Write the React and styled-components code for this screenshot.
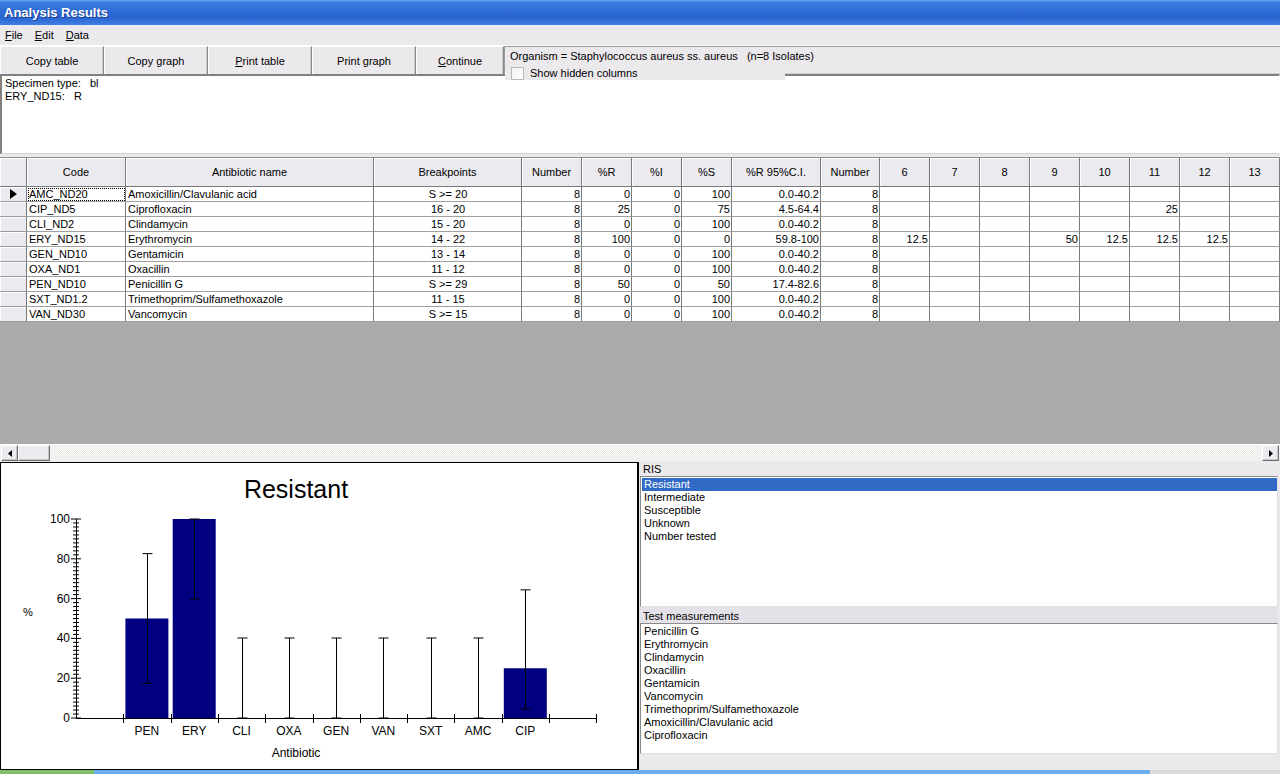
import React from "react"
import styled, { createGlobalStyle } from "styled-components"

const GlobalStyle = createGlobalStyle`
  html, body {
    margin: 0;
    padding: 0;
  }
  body {
    font-family: "Liberation Sans", Arial, sans-serif;
    font-size: 11px;
    color: #000;
    background: #ece9ed;
    overflow: hidden;
  }
`

const COLS =
  "27px 99px 248px 148px 60px 50px 50px 50px 89px 59px 50px 50px 50px 50px 50px 50px 50px 50px"

const HEADERS = [
  "",
  "Code",
  "Antibiotic name",
  "Breakpoints",
  "Number",
  "%R",
  "%I",
  "%S",
  "%R 95%C.I.",
  "Number",
  "6",
  "7",
  "8",
  "9",
  "10",
  "11",
  "12",
  "13",
]

const ROWS = [
  ["AMC_ND20", "Amoxicillin/Clavulanic acid", "S >= 20", "8", "0", "0", "100", "0.0-40.2", "8", {}],
  ["CIP_ND5", "Ciprofloxacin", "16 - 20", "8", "25", "0", "75", "4.5-64.4", "8", { 11: "25" }],
  ["CLI_ND2", "Clindamycin", "15 - 20", "8", "0", "0", "100", "0.0-40.2", "8", {}],
  [
    "ERY_ND15",
    "Erythromycin",
    "14 - 22",
    "8",
    "100",
    "0",
    "0",
    "59.8-100",
    "8",
    { 6: "12.5", 9: "50", 10: "12.5", 11: "12.5", 12: "12.5" },
  ],
  ["GEN_ND10", "Gentamicin", "13 - 14", "8", "0", "0", "100", "0.0-40.2", "8", {}],
  ["OXA_ND1", "Oxacillin", "11 - 12", "8", "0", "0", "100", "0.0-40.2", "8", {}],
  ["PEN_ND10", "Penicillin G", "S >= 29", "8", "50", "0", "50", "17.4-82.6", "8", {}],
  ["SXT_ND1.2", "Trimethoprim/Sulfamethoxazole", "11 - 15", "8", "0", "0", "100", "0.0-40.2", "8", {}],
  ["VAN_ND30", "Vancomycin", "S >= 15", "8", "0", "0", "100", "0.0-40.2", "8", {}],
]

// chart data, in the order the graph shows them
const BARS = [
  { code: "PEN", r: 50, lo: 17.4, hi: 82.6 },
  { code: "ERY", r: 100, lo: 59.8, hi: 100 },
  { code: "CLI", r: 0, lo: 0, hi: 40.2 },
  { code: "OXA", r: 0, lo: 0, hi: 40.2 },
  { code: "GEN", r: 0, lo: 0, hi: 40.2 },
  { code: "VAN", r: 0, lo: 0, hi: 40.2 },
  { code: "SXT", r: 0, lo: 0, hi: 40.2 },
  { code: "AMC", r: 0, lo: 0, hi: 40.2 },
  { code: "CIP", r: 25, lo: 4.5, hi: 64.4 },
]

const RIS = ["Resistant", "Intermediate", "Susceptible", "Unknown", "Number tested"]

const TESTS = [
  "Penicillin G",
  "Erythromycin",
  "Clindamycin",
  "Oxacillin",
  "Gentamicin",
  "Vancomycin",
  "Trimethoprim/Sulfamethoxazole",
  "Amoxicillin/Clavulanic acid",
  "Ciprofloxacin",
]

const Window = styled.div`
  width: 1280px;
  height: 774px;
  display: flex;
  flex-direction: column;
  background: #ece9ed;
  overflow: hidden;
`

const TitleBar = styled.div`
  height: 25px;
  flex: none;
  display: flex;
  align-items: center;
  padding-left: 4px;
  color: #fff;
  font-weight: bold;
  font-size: 13px;
  text-shadow: 1px 1px 0 #1c3f94;
  background: linear-gradient(
    to bottom,
    #6aa2f0 0%,
    #3a7ee2 10%,
    #2d6ad6 45%,
    #2a64d0 70%,
    #3f80e4 100%
  );
`

const MenuBar = styled.div`
  height: 20px;
  flex: none;
  display: flex;
  align-items: center;
`

const MenuItem = styled.span`
  padding: 0 6px 0 5px;
  margin-right: 1px;
`

const ToolRow = styled.div`
  height: 29px;
  flex: none;
  display: flex;
  border-top: 1px solid #fff;
  box-sizing: border-box;
  position: relative;
  z-index: 2;
`

const ToolButton = styled.div`
  width: ${(p) => p.$w}px;
  flex: none;
  display: flex;
  align-items: center;
  justify-content: center;
  box-sizing: border-box;
  border-left: 1px solid #fff;
  border-top: 1px solid #fff;
  border-right: 1px solid #8a8a8a;
  box-shadow: inset -1px 0 0 #c9c7cc;
  padding-top: 1px;
`

const OrganismPanel = styled.div`
  flex: 1;
  position: relative;
  box-sizing: border-box;
  border-left: 1px solid #9a9a9a;
  border-top: 1px solid #9a9a9a;
  border-bottom: 1px solid #d0d0d0;
  padding: 3px 0 0 5px;
  line-height: 13px;
`

const HiddenColumns = styled.label`
  position: absolute;
  left: 0;
  top: 17px;
  width: 280px;
  height: 16px;
  display: flex;
  align-items: center;
  gap: 6px;
  padding: 2px 0 0 6px;
  box-sizing: border-box;
  background: #ece9ed;
`

const CheckBox = styled.span`
  width: 11px;
  height: 11px;
  flex: none;
  border: 1px solid #b8b8b8;
  background: linear-gradient(135deg, #f2f2f2, #fff);
`

const Notes = styled.div`
  height: 80px;
  flex: none;
  box-sizing: border-box;
  background: #fff;
  border-top: 2px solid #808080;
  border-left: 2px solid #808080;
  border-right: 1px solid #fff;
  border-bottom: 1px solid #d4d0c8;
  padding: 1px 3px;
  line-height: 13px;
  white-space: pre;
  margin-bottom: 3px;
`

const GridArea = styled.div`
  height: 287px;
  flex: none;
  background: #ababab;
  border-top: 1px solid #8e8e8e;
  box-sizing: border-box;
  overflow: hidden;
`

const GridRow = styled.div`
  display: grid;
  grid-template-columns: ${COLS};
  height: ${(p) => p.$h}px;
  background: #fff;
`

const HeadCell = styled.div`
  display: flex;
  align-items: center;
  justify-content: center;
  box-sizing: border-box;
  background: #ebeaef;
  border-right: 1px solid #7a7a7a;
  border-bottom: 1px solid #7a7a7a;
  box-shadow: inset 1px 1px 0 #fff;
  white-space: nowrap;
  overflow: hidden;
`

const RowHead = styled.div`
  display: flex;
  align-items: center;
  box-sizing: border-box;
  padding-left: 10px;
  background: #ebeaef;
  border-right: 1px solid #7a7a7a;
  border-bottom: 1px solid #9a9a9a;
  box-shadow: inset 1px 1px 0 #fff;
`

const Cell = styled.div`
  display: flex;
  align-items: center;
  justify-content: ${(p) =>
    p.$align === "right" ? "flex-end" : p.$align === "center" ? "center" : "flex-start"};
  box-sizing: border-box;
  padding: 0 1px 0 2px;
  border-right: 1px solid #7a7a7a;
  border-bottom: 1px solid #a0a0a0;
  white-space: nowrap;
  overflow: hidden;
  outline: ${(p) => (p.$focus ? "1px dotted #000" : "none")};
  outline-offset: -2px;
`

const ScrollBar = styled.div`
  height: 17px;
  flex: none;
  display: flex;
  align-items: stretch;
  background: repeating-conic-gradient(#fbfbf9 0 25%, #e9e8e4 0 50%) 0 0 / 2px 2px;
  border-top: 1px solid #fff;
  box-sizing: border-box;
`

const ScrollButton = styled.div`
  width: ${(p) => p.$w}px;
  flex: none;
  margin-left: ${(p) => p.$ml || 0}px;
  display: flex;
  align-items: center;
  justify-content: center;
  box-sizing: border-box;
  background: #ebeaef;
  border-top: 1px solid #fff;
  border-left: 1px solid #fff;
  border-right: 1px solid #707070;
  border-bottom: 1px solid #707070;
  box-shadow: inset -1px -1px 0 #c6c4c8;
`

const Bottom = styled.div`
  height: 309px;
  flex: none;
  display: flex;
  padding-top: 1px;
  box-sizing: border-box;
`

const ChartPanel = styled.div`
  width: 639px;
  height: 308px;
  flex: none;
  box-sizing: border-box;
  border: 1px solid #000;
  border-right-width: 2px;
  background: #fff;
`

const SidePanel = styled.div`
  flex: 1;
  display: flex;
  flex-direction: column;
  padding-right: 2px;
`

const ListLabel = styled.div`
  height: ${(p) => p.$h}px;
  flex: none;
  display: flex;
  align-items: flex-end;
  padding-left: 4px;
  line-height: 13px;
  background: ${(p) => p.$bg || "transparent"};
`

const ListBox = styled.div`
  height: ${(p) => p.$h}px;
  flex: none;
  box-sizing: border-box;
  background: #fff;
  border-top: 1px solid #8a8a8a;
  border-left: 1px solid #8a8a8a;
  border-right: 1px solid #e0e0e0;
  border-bottom: 1px solid #e0e0e0;
  padding: 1px 0 0 1px;
  margin-left: 1px;
`

const ListItem = styled.div`
  height: 13px;
  line-height: 13px;
  padding-left: 2px;
  background: ${(p) => (p.$selected ? "#316ac5" : "transparent")};
  color: ${(p) => (p.$selected ? "#fff" : "#000")};
`

const Taskbar = styled.div`
  height: 4px;
  flex: none;
  display: flex;
`

const TaskSegment = styled.div`
  width: ${(p) => (p.$w ? `${p.$w}px` : "auto")};
  flex: ${(p) => (p.$w ? "none" : 1)};
  background: ${(p) => p.$c};
`

const U = styled.span`
  text-decoration: underline;
`

const yOf = (v) => 718 - v * 1.99
const tickX = (k) => 123.3 + 47.3 * k
const centerX = (k) => 146.9 + 47.3 * k

function Chart() {
  const yTicks = []
  for (let v = 0; v <= 100; v += 2) {
    const major = v % 20 === 0
    const y = yOf(v)
    yTicks.push(
      <line
        key={v}
        x1={major ? 71 : 73}
        x2={major ? 81 : 79}
        y1={y}
        y2={y}
        stroke="#000"
        strokeWidth="1"
      />
    )
    if (major) {
      yTicks.push(
        <text key={`l${v}`} x="70" y={y + 4} textAnchor="end" fontSize="12">
          {v}
        </text>
      )
    }
  }

  return (
    <svg width="636" height="306" viewBox="1 463 636 306" fontFamily="Liberation Sans, Arial, sans-serif">
      <text x="296" y="498" textAnchor="middle" fontSize="25">
        Resistant
      </text>
      <text x="23" y="616" fontSize="11">
        %
      </text>
      <text x="296" y="757" textAnchor="middle" fontSize="12">
        Antibiotic
      </text>

      {BARS.map((b, k) =>
        b.r > 0 ? (
          <rect
            key={`b${b.code}`}
            x={centerX(k) - 21.5}
            y={yOf(b.r)}
            width="43"
            height={718 - yOf(b.r)}
            fill="#000080"
          />
        ) : null
      )}

      <line x1="76.5" x2="76.5" y1="519" y2="718" stroke="#000" />
      {yTicks}
      <line x1="76" x2="596.5" y1="718.5" y2="718.5" stroke="#000" />
      {Array.from({ length: 11 }, (_, k) => (
        <line
          key={`t${k}`}
          x1={Math.round(tickX(k)) + 0.5}
          x2={Math.round(tickX(k)) + 0.5}
          y1="714"
          y2="723"
          stroke="#000"
        />
      ))}

      {BARS.map((b, k) => {
        const x = Math.round(centerX(k)) + 0.5
        return (
          <g key={`e${b.code}`} stroke="#000" strokeWidth="1">
            <line x1={x} x2={x} y1={yOf(b.hi)} y2={yOf(b.lo)} />
            <line x1={x - 5} x2={x + 5} y1={yOf(b.hi)} y2={yOf(b.hi)} />
            <line x1={x - 5} x2={x + 5} y1={yOf(b.lo)} y2={yOf(b.lo)} />
          </g>
        )
      })}

      {BARS.map((b, k) => (
        <text key={`x${b.code}`} x={centerX(k)} y="735" textAnchor="middle" fontSize="12">
          {b.code}
        </text>
      ))}
    </svg>
  )
}

function RowMarker() {
  return (
    <svg width="8" height="10" viewBox="0 0 8 10">
      <polygon points="0,0 7,5 0,10" fill="#000" />
    </svg>
  )
}

const ALIGN = [null, "left", "left", "center", "right", "right", "right", "right", "right", "right"]

export default function App() {
  return (
    <>
      <GlobalStyle />
      <Window>
        <TitleBar>Analysis Results</TitleBar>

        <MenuBar>
          <MenuItem>
            <U>F</U>ile
          </MenuItem>
          <MenuItem>
            <U>E</U>dit
          </MenuItem>
          <MenuItem>
            <U>D</U>ata
          </MenuItem>
        </MenuBar>

        <ToolRow>
          <ToolButton $w={104}>Copy table</ToolButton>
          <ToolButton $w={104}>Copy graph</ToolButton>
          <ToolButton $w={104}>
            <U>P</U>rint table
          </ToolButton>
          <ToolButton $w={104}>Print graph</ToolButton>
          <ToolButton $w={88}>
            <U>C</U>ontinue
          </ToolButton>
          <OrganismPanel>
            Organism = Staphylococcus aureus ss. aureus&nbsp;&nbsp;&nbsp;(n=8 Isolates)
            <HiddenColumns>
              <CheckBox />
              Show hidden columns
            </HiddenColumns>
          </OrganismPanel>
        </ToolRow>

        <Notes>{"Specimen type:   bl\nERY_ND15:   R"}</Notes>

        <GridArea>
          <GridRow $h={29}>
            {HEADERS.map((h, i) => (
              <HeadCell key={i}>{h}</HeadCell>
            ))}
          </GridRow>
          {ROWS.map((row, r) => {
            const extra = row[9]
            return (
              <GridRow key={row[0]} $h={15}>
                <RowHead>{r === 0 ? <RowMarker /> : null}</RowHead>
                {row.slice(0, 9).map((v, i) => (
                  <Cell key={i} $align={ALIGN[i + 1]} $focus={r === 0 && i === 0}>
                    {v}
                  </Cell>
                ))}
                {[6, 7, 8, 9, 10, 11, 12, 13].map((c) => (
                  <Cell key={`c${c}`} $align="right">
                    {extra[c] || ""}
                  </Cell>
                ))}
              </GridRow>
            )
          })}
        </GridArea>

        <ScrollBar>
          <ScrollButton $w={17} $ml={1}>
            <svg width="4" height="7" viewBox="0 0 4 7">
              <polygon points="4,0 0,3.5 4,7" fill="#000" />
            </svg>
          </ScrollButton>
          <ScrollButton $w={32}></ScrollButton>
          <ScrollButton $w={17} $ml={1212}>
            <svg width="4" height="7" viewBox="0 0 4 7">
              <polygon points="0,0 4,3.5 0,7" fill="#000" />
            </svg>
          </ScrollButton>
        </ScrollBar>

        <Bottom>
          <ChartPanel>
            <Chart />
          </ChartPanel>
          <SidePanel>
            <ListLabel $h={14}>RIS</ListLabel>
            <ListBox $h={131}>
              {RIS.map((item, i) => (
                <ListItem key={item} $selected={i === 0}>
                  {item}
                </ListItem>
              ))}
            </ListBox>
            <ListLabel $h={16} $bg="#e4e2e8">
              Test measurements
            </ListLabel>
            <ListBox $h={131}>
              {TESTS.map((item) => (
                <ListItem key={item}>{item}</ListItem>
              ))}
            </ListBox>
          </SidePanel>
        </Bottom>

        <Taskbar>
          <TaskSegment $w={94} $c="#7fbf6a" />
          <TaskSegment $c="#6aaeea" />
          <TaskSegment $w={130} $c="#dcdcdc" />
        </Taskbar>
      </Window>
    </>
  )
}
